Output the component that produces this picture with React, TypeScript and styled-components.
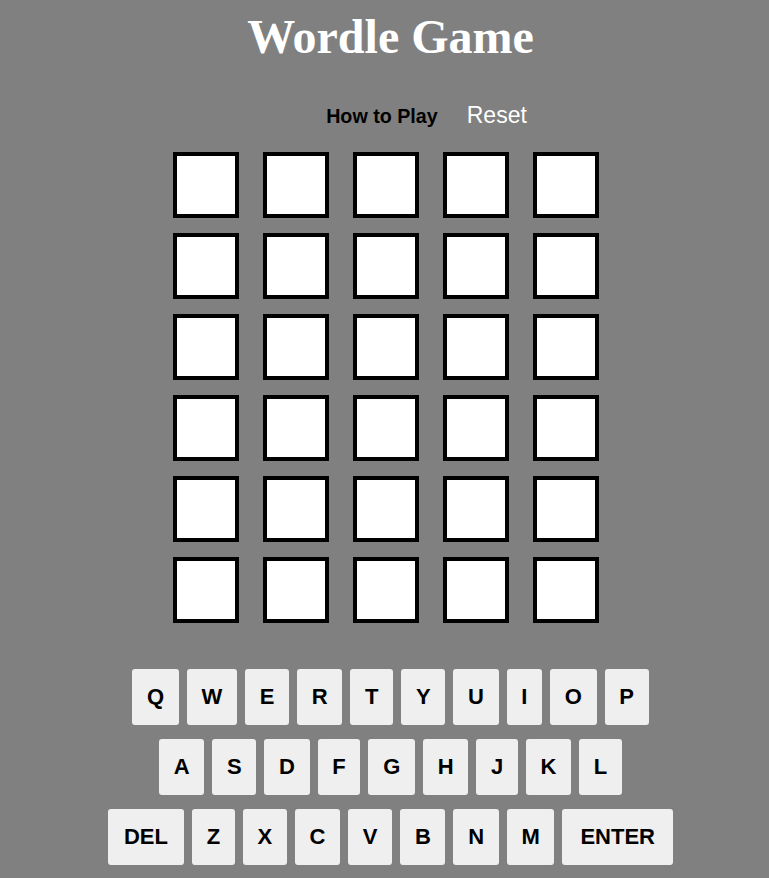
import React from 'react';
import styled, { createGlobalStyle } from 'styled-components';

const GlobalStyle = createGlobalStyle`
    html, body {
        margin: 0;
        padding: 0;
        background: #808080;
    }
`;

const Page = styled.div`
    display: flex;
    flex-direction: column;
    align-items: center;
    padding: 9px 0 0 12px;
    min-height: 869px;
`;

const Title = styled.h1`
    margin: 0;
    font-family: "Liberation Serif", "Times New Roman", serif;
    font-size: 48px;
    font-weight: bold;
    line-height: 55px;
    color: #fff;
`;

const Nav = styled.div`
    display: flex;
    align-items: baseline;
    gap: 29px;
    margin: 38px 0 0 72px;
    font-family: "Liberation Sans", Arial, sans-serif;
`;

const NavButton = styled.button<{ $light?: boolean }>`
    background: none;
    border: none;
    padding: 0;
    cursor: pointer;
    font-family: inherit;
    font-size: ${(p) => (p.$light ? '23px' : '19.7px')};
    font-weight: ${(p) => (p.$light ? 'normal' : 'bold')};
    color: ${(p) => (p.$light ? '#fff' : '#000')};
    line-height: 26px;
`;

const Board = styled.div`
    display: grid;
    grid-template-columns: repeat(5, 66px);
    grid-auto-rows: 66px;
    column-gap: 24px;
    row-gap: 15px;
    margin: 23px 9px 0 0;
`;

const Tile = styled.div`
    box-sizing: border-box;
    background: #fff;
    border: 4px solid #000;
`;

const Keyboard = styled.div`
    display: flex;
    flex-direction: column;
    align-items: center;
    gap: 14px;
    margin-top: 46px;
`;

const KeyRow = styled.div`
    display: flex;
    gap: 8px;
`;

const Key = styled.button<{ $wide?: number }>`
    height: 56px;
    padding: 0 ${(p) => p.$wide ?? 14.7}px;
    border: none;
    border-radius: 3px;
    background: #efefef;
    font-family: "Liberation Sans", Arial, sans-serif;
    font-size: 22px;
    font-weight: bold;
    color: #000;
    cursor: pointer;
`;

const rows = [
    ['Q', 'W', 'E', 'R', 'T', 'Y', 'U', 'I', 'O', 'P'],
    ['A', 'S', 'D', 'F', 'G', 'H', 'J', 'K', 'L'],
    ['DEL', 'Z', 'X', 'C', 'V', 'B', 'N', 'M', 'ENTER'],
];

const App = () => {
    const tiles = Array.from({ length: 30 });

    return (
        <Page>
            <GlobalStyle />
            <Title>Wordle Game</Title>

            <Nav>
                <NavButton>How to Play</NavButton>
                <NavButton $light>Reset</NavButton>
            </Nav>

            <Board>
                {tiles.map((_, i) => <Tile key={i} />)}
            </Board>

            <Keyboard>
                {rows.map((row, r) => (
                    <KeyRow key={r}>
                        {row.map((k) => (
                            <Key key={k} $wide={k === 'DEL' ? 16 : k === 'ENTER' ? 18 : undefined}>
                                {k}
                            </Key>
                        ))}
                    </KeyRow>
                ))}
            </Keyboard>
        </Page>
    );
};

export default App;
